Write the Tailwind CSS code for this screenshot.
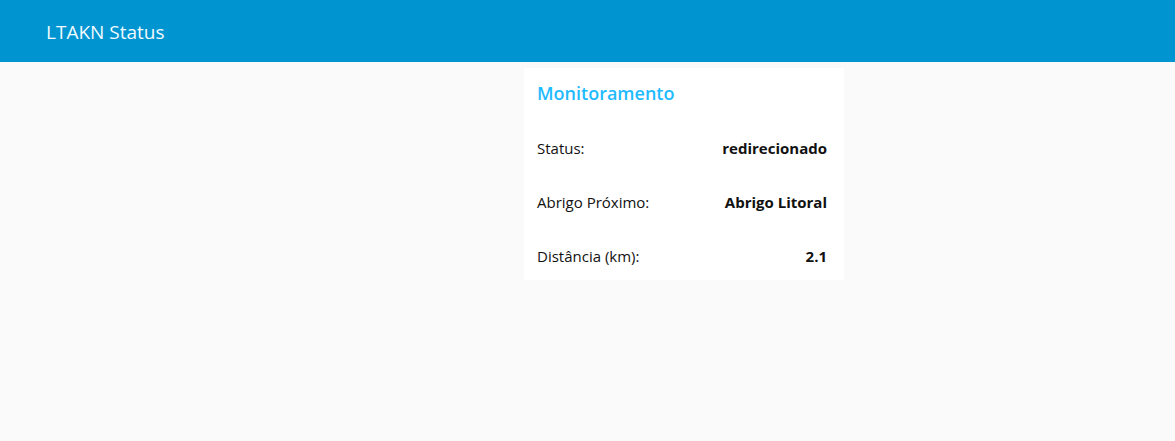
<!DOCTYPE html>
<html lang="pt-BR">
<head>
<meta charset="utf-8">
<meta name="viewport" content="width=device-width, initial-scale=1">
<title>LTAKN Status</title>
<script src="https://cdn.jsdelivr.net/npm/@tailwindcss/browser@4"></script>
</head>
<body class="min-h-screen bg-[#fafafa] font-['Open_Sans','Noto_Sans',sans-serif] text-[#111111]">
<header class="flex h-[62px] items-center bg-[#0094d0] px-[46px] pt-0.5">
<h1 class="text-[19px] text-[#f0faff]">LTAKN Status</h1>
</header>
<main class="flex justify-center pt-1.5 pl-[193px]">
<section class="w-80 bg-white pr-[17px] pb-px pl-[13px] text-[15px]">
<h2 class="flex h-[50px] items-center text-lg font-semibold text-[#1fbbff]">Monitoramento</h2>
<dl class="flex flex-col gap-2 pt-[7px]">
<div class="flex h-[46px] items-center justify-between"><dt>Status:</dt><dd class="font-bold">redirecionado</dd></div>
<div class="flex h-[46px] items-center justify-between"><dt>Abrigo Próximo:</dt><dd class="font-bold">Abrigo Litoral</dd></div>
<div class="flex h-[46px] items-center justify-between"><dt>Distância (km):</dt><dd class="font-bold">2.1</dd></div>
</dl>
</section>
</main>
</body>
</html>
